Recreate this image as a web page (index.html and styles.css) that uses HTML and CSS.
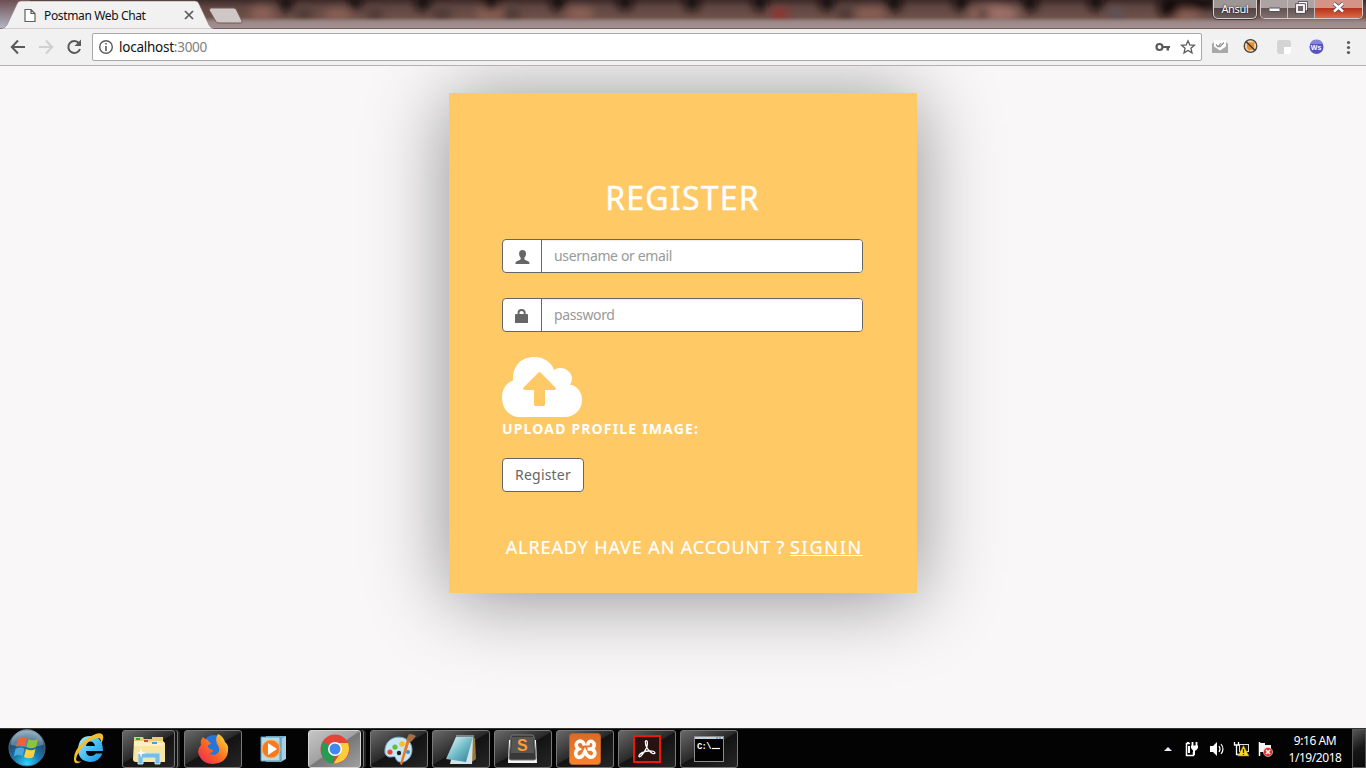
FILE: index.html
```html
<!DOCTYPE html>
<html lang="en">
<head>
<meta charset="utf-8">
<title>Postman Web Chat</title>
<link rel="stylesheet" href="styles.css">
</head>
<body>
<div class="desktop">
  <header class="titlebar">
    <svg class="glass" width="1366" height="29" viewBox="0 0 1366 29" aria-hidden="true">
      <defs>
        <linearGradient id="base" x1="0" y1="0" x2="0" y2="1"><stop offset="0" stop-color="#3e2b2a"/><stop offset=".25" stop-color="#604641"/><stop offset=".65" stop-color="#70524b"/><stop offset=".78" stop-color="#8b7773"/><stop offset="1" stop-color="#a49091"/></linearGradient>
        <filter id="soft" x="-50%" y="-50%" width="200%" height="200%"><feGaussianBlur stdDeviation="4"/></filter>
        <linearGradient id="leftglass" x1="0" y1="0" x2="0" y2="1"><stop offset="0" stop-color="#6c4f50"/><stop offset="1" stop-color="#b4b5c6"/></linearGradient>
        <linearGradient id="edge" x1="0" y1="0" x2="0" y2="1"><stop offset="0" stop-color="#9c8888" stop-opacity="0"/><stop offset=".5" stop-color="#9c8888"/><stop offset="1" stop-color="#a49293"/></linearGradient>
      </defs>
      <rect width="1366" height="29" fill="url(#base)"/>
      <g filter="url(#soft)">
        <g fill="#8c6155"><ellipse cx="262" cy="14" rx="12" ry="8"/><ellipse cx="338" cy="15" rx="14" ry="6"/><ellipse cx="490" cy="14" rx="14" ry="7"/><ellipse cx="580" cy="14" rx="14" ry="7"/><ellipse cx="870" cy="14" rx="16" ry="6"/><ellipse cx="994" cy="14" rx="25" ry="9" fill="#9c6f66"/><ellipse cx="1184" cy="16" rx="16" ry="7"/></g>
        <g fill="#4c3936"><ellipse cx="304" cy="14" rx="9" ry="6"/><ellipse cx="375" cy="14" rx="9" ry="6"/><ellipse cx="442" cy="14" rx="10" ry="6"/><ellipse cx="512" cy="14" rx="9" ry="6"/><ellipse cx="846" cy="14" rx="9" ry="6"/><ellipse cx="983" cy="14" rx="7" ry="5"/></g>
        <g fill="#160d0f"><ellipse cx="286" cy="3" rx="7" ry="9"/><ellipse cx="355" cy="2" rx="7" ry="8"/><ellipse cx="423" cy="2" rx="8" ry="9"/><ellipse cx="491" cy="2" rx="8" ry="9"/><ellipse cx="558" cy="2" rx="8" ry="9"/><ellipse cx="625" cy="2" rx="8" ry="8"/><ellipse cx="692" cy="2" rx="8" ry="9"/><ellipse cx="760" cy="2" rx="8" ry="9"/><ellipse cx="827" cy="2" rx="8" ry="9"/><ellipse cx="894" cy="2" rx="8" ry="10"/><ellipse cx="961" cy="2" rx="8" ry="9"/><ellipse cx="1030" cy="2" rx="8" ry="10"/><ellipse cx="1096" cy="2" rx="8" ry="9"/><ellipse cx="1169" cy="6" rx="11" ry="12"/><ellipse cx="1196" cy="3" rx="28" ry="7"/></g>
        <ellipse cx="780" cy="14" rx="9" ry="5" fill="#9a2e2b"/><ellipse cx="1116" cy="14" rx="9" ry="6" fill="#5c5259"/>
        <ellipse cx="1245" cy="22" rx="55" ry="4" fill="#695858"/>
      </g>
      <rect x="0" width="30" height="28" fill="url(#leftglass)"/>
      <rect y="17" x="200" width="1166" height="11" fill="url(#edge)"/>
      <rect y="28" width="1366" height="1" fill="#76605f"/>
      <path d="M209.500 10.500Q209 8 211.500 8H233.500Q235.500 8 236.500 10L242 21Q242.700 23 240.500 23H219Q216.500 23 215.500 21Z" fill="#cec7c5" stroke="#715b58"/>
      <path d="M0 29Q5 28.500 7 25L17 4Q18 1 21 1H195Q198 1 199 4L209 25Q210.500 28 214 29Z" fill="#f2f1f2" stroke="#8d7b7b" stroke-width=".6"/>
    </svg>
    <div class="tab">
      <svg width="12" height="15" viewBox="0 0 12 15"><path d="M1 1.500H7L11 5.500V13.500H1ZM7 1.500V5.500H11" fill="#fff" stroke="#5f5f5f" stroke-width="1.200"/></svg>
      <span class="tab-title">Postman Web Chat</span>
      <svg class="tab-close" width="10" height="10" viewBox="0 0 10 10"><path d="M1 1L9 9M9 1L1 9" stroke="#5a5a5a" stroke-width="1.700"/></svg>
    </div>
    <div class="window-controls">
      <div class="user">Ansul</div>
      <div class="controls">
        <span class="ctl"><svg width="13" height="6" viewBox="0 0 13 6"><rect x="1" y="1" width="11" height="3.500" rx=".5" fill="#fff" stroke="#55505c"/></svg></span>
        <span class="ctl"><svg width="13" height="13" viewBox="0 0 13 13"><path d="M4.500 3V1.800H11.200V8.500H9.500" fill="none" stroke="#454354" stroke-width="3"/><path d="M4.500 3V1.800H11.200V8.500H9.500" fill="none" stroke="#fff" stroke-width="1.500"/><rect x="2" y="4" width="7" height="7" fill="none" stroke="#454354" stroke-width="3.400"/><rect x="2" y="4" width="7" height="7" fill="#70606a" stroke="#fff" stroke-width="1.800"/></svg></span>
        <span class="ctl close"><svg width="13" height="11" viewBox="0 0 13 11"><path d="M2 1.500L11 9.500M11 1.500L2 9.500" stroke="#514354" stroke-width="4"/><path d="M2 1.500L11 9.500M11 1.500L2 9.500" stroke="#fff" stroke-width="2.500"/></svg></span>
      </div>
    </div>
  </header>

  <nav class="toolbar">
    <svg class="nav-icons" width="92" height="36" viewBox="0 0 92 36" fill="none" stroke-width="2"><path d="M25 18H12M18 11.500L11.800 18L18 24.500" stroke="#5a5a5a"/><path d="M39 18H52M46 11.500L52.200 18L46 24.500" stroke="#d0d0d0"/><path d="M79 14.200A6 6 0 1 0 80 20" stroke="#5a5a5a"/><path d="M81 10.500V17H74.500Z" fill="#5a5a5a"/></svg>
    <div class="address">
      <svg width="16" height="16" viewBox="0 0 16 16"><circle cx="8" cy="8" r="6.300" fill="none" stroke="#5a5a5a" stroke-width="1.400"/><path d="M7.200 7H8.800V12H7.200ZM7.200 4H8.800V5.600H7.200Z" fill="#5a5a5a"/></svg>
      <span class="url">localhost<em>:3000</em></span>
      <svg width="16" height="10" viewBox="0 0 16 10"><circle cx="4.500" cy="5" r="3" fill="none" stroke="#5a5a5a" stroke-width="2.200"/><path d="M8 4H15V6H14V8.500H11.500V6H8Z" fill="#5a5a5a"/></svg>
      <svg class="star" width="16" height="16" viewBox="0 0 16 16"><path d="M8 1.800L9.800 6L14.400 6.300L10.900 9.300L12 13.900L8 11.400L4 13.900L5.100 9.300L1.600 6.300L6.200 6Z" fill="none" stroke="#5a5a5a" stroke-width="1.300"/></svg>
    </div>
    <svg class="extensions" width="164" height="36" viewBox="1202 29 164 36">
      <path d="M1212 44L1215 41H1225L1228 44V53H1212Z" fill="#a9a9a9"/><path d="M1214 40.500H1226V46.500L1220 50.500L1214 46.500Z" fill="#fff"/><path d="M1216 44.500L1218 46.800L1221 43M1219 46L1220 46.800L1224 42.500" fill="none" stroke="#8b8b8b" stroke-width="1.200"/>
      <circle cx="1250.500" cy="46" r="6.300" fill="#f6d6a8" stroke="#454545" stroke-width="1.300"/><circle cx="1250.500" cy="46" r="3.800" fill="#ed8d2b"/><path d="M1247 42L1248 44M1254 42L1253 44M1248 48L1250 50" stroke="#ed8d2b" stroke-width="2"/><path d="M1246 41.500L1255 50.500" stroke="#393939" stroke-width="1.400"/>
      <rect x="1277" y="40" width="14" height="14" rx="3" fill="#d4d4d4"/><path d="M1284 47H1291V52Q1291 54 1289 54H1284Z" fill="#fff"/>
      <circle cx="1316.500" cy="47" r="7" fill="#5554c2"/><path d="M1310 44A7 7 0 0 1 1323 44Z" fill="#8583dd"/><text x="1310.800" y="50" class="ws-label">Ws</text>
      <g fill="#5a5a5a"><circle cx="1348.500" cy="42.500" r="1.600"/><circle cx="1348.500" cy="47.500" r="1.600"/><circle cx="1348.500" cy="52.500" r="1.600"/></g>
    </svg>
  </nav>

  <main class="page">
    <form class="card">
      <h1 class="heading">REGISTER</h1>
      <div class="field">
        <span class="addon"><svg width="15" height="14" viewBox="0 0 15 14"><path d="M7.500 0C9.900 0 11.200 1.700 11 3.900C10.900 5.700 10.200 6.900 9.400 7.800V9.200C9.700 10.100 14 10.900 14.400 12.500V14H.5V12.500C1 10.900 5.300 10.100 5.700 9.200V7.800C4.900 6.900 4.200 5.700 4.100 3.900C3.900 1.700 5.200 0 7.500 0Z" fill="#666"/></svg></span>
        <input class="input user-input" type="text" placeholder="username or email">
      </div>
      <div class="field">
        <span class="addon"><svg width="14" height="14" viewBox="0 0 14 14"><path d="M2.600 5V3.500Q2.600 0 6.500 0Q10.600 0 10.600 3.500V5H12Q13 5 13 6V14H0V6Q0 5 1 5ZM4.500 5H8.700V3.500Q8.700 2 6.600 2Q4.500 2 4.500 3.500Z" fill="#666"/></svg></span>
        <input class="input pass-input" type="password" placeholder="password">
      </div>
      <label class="upload">
        <svg width="80" height="60" viewBox="0 0 80 60"><path d="M11 23.500C10.500 9 19 0 32 0C41 0 48.500 4 52.200 13C60 7.800 70 14 70 22Q70 25 68 27.500C76 29 80 36 80 43C80 53 72 60 63 60H17C7 60 0 51 0 40.500C0 32 4 26.500 11 23.500Z" fill="#fff"/><path d="M36.500 15.500Q37.500 14.500 38.500 15.500L53.500 30.500Q54.500 33 52 33H43V47.500Q43 49 41.500 49H33.500Q32 49 32 47.500V33H23Q20.500 33 21.500 30.500Z" fill="#ffc966"/></svg>
        <span class="upload-label">UPLOAD PROFILE IMAGE:</span>
      </label>
      <button class="submit" type="button"><span>Register</span></button>
      <p class="signin"><span class="already">ALREADY HAVE AN ACCOUNT ?</span> <a class="link" href="#">SIGNIN</a></p>
    </form>
  </main>

  <footer class="taskbar">
    <svg width="0" height="0" class="defs" aria-hidden="true"><defs>
      <radialGradient id="orb" cx=".5" cy=".95" r=".9"><stop offset="0" stop-color="#32d5ff"/><stop offset=".4" stop-color="#157db8"/><stop offset=".75" stop-color="#234d70"/><stop offset="1" stop-color="#7798aa"/></radialGradient>
      <linearGradient id="blue" x1="0" y1="0" x2="1" y2="1"><stop offset="0" stop-color="#b5ecff"/><stop offset=".5" stop-color="#4ac0f3"/><stop offset="1" stop-color="#168ee0"/></linearGradient>
      <linearGradient id="fox" x1="0" y1="1" x2="1" y2="0"><stop offset="0" stop-color="#e8205b"/><stop offset=".5" stop-color="#ff6c20"/><stop offset="1" stop-color="#ffe83b"/></linearGradient>
      <linearGradient id="paper" x1="0" y1="0" x2="1" y2="1"><stop offset="0" stop-color="#f3feff"/><stop offset=".5" stop-color="#75bdca"/><stop offset="1" stop-color="#287c93"/></linearGradient>
      <linearGradient id="orange" x1="0" y1="0" x2="0" y2="1"><stop offset="0" stop-color="#d96b27"/><stop offset="1" stop-color="#fb8328"/></linearGradient>
    </defs></svg>
    <div class="start"><svg width="38" height="38" viewBox="0 0 38 38"><circle cx="19" cy="19" r="18" fill="url(#orb)" stroke="#496d86"/><path d="M3 16A16 16 0 0 1 35 16Q20 20 3 16Z" fill="#c5d9e4" opacity=".35"/><path d="M10 10Q14 7 19 9.500L17 17.500Q12 15.500 8 18Z" fill="#ef6239"/><path d="M20.500 10Q25 12.500 30 10L28 18Q23 20.500 18.500 18Z" fill="#8bc53f"/><path d="M7.500 20Q12 17.500 16.500 19.500L14.500 27Q10 25 5.800 27.500Z" fill="#4ca6e0"/><path d="M18 20Q23 22.500 27.500 20L25.500 28Q21 30.500 16 28Z" fill="#ffd13d"/></svg></div>
    <div class="slot"><svg width="32" height="32" viewBox="0 0 32 32"><path fill-rule="evenodd" d="M30 18H13Q13 23 18 23Q21 23 23 20.500H29.500Q26 29 17 29Q5 28 5 16Q6 3 17 3Q30 3 30 18ZM13 13H22Q21 8.500 17.500 8.500Q14 8.500 13 13Z" fill="url(#blue)"/><path d="M9 28Q2 33 1 27Q0 18 11 8Q24-2 29 1Q32 4 28 11Q29 4 23 5Q15 7 8 16Q1 26 4 28Q6 29 9 28Z" fill="#f6bd27"/></svg></div>
    <div class="slot"><div class="task stacked"><svg width="34" height="32" viewBox="0 0 34 32"><path d="M2 8V4H11L12 6H20V4H31V26H2Z" fill="#e6cc73"/><path d="M2 8H31L33 10V29H4Q1 29 1 26Z" fill="#f7e5a0"/><path d="M2 8H12V10H31V13H2Z" fill="#fff1bd"/><rect x="4" y="5" width="4" height="2" fill="#24a842"/><rect x="12" y="7" width="4" height="2" fill="#d04e37"/><rect x="20" y="9" width="5" height="2" fill="#3ca7df"/><path d="M6 20H28V31H23V25H11V31H6Z" fill="#79bde0" stroke="#c7ebfa"/><path d="M9 14L10 19L14 20L10 21L9 25L8 21L4 20L8 19Z" fill="#fff"/></svg></div></div>
    <div class="slot"><div class="task"><svg width="32" height="32" viewBox="0 0 32 32"><circle cx="17" cy="14" r="12" fill="#2675dd"/><path d="M6 4Q3 7 4 12Q1 15 1 19Q4 31 16 31Q30 30 31 18Q32 12 28 9Q26 3 21 1Q18 5 20 11Q24 16 21 20Q17 24 12 20Q16 20 16 17Q10 16 11 12Q13 12 14 10Q11 9 11 7Q8 7 6 4Z" fill="url(#fox)"/></svg></div></div>
    <div class="slot"><svg width="28" height="28" viewBox="0 0 28 28"><path d="M7 1H27V24L22 27H7Z" fill="#76aecb"/><path d="M2 2H21V26H2Z" fill="#b7dce9" stroke="#5a9bbc"/><path d="M24 3V25M26 2V24" stroke="#d9f1fb"/><circle cx="12" cy="14" r="9" fill="#f47b20" stroke="#ffae5b"/><path d="M9 8L18 14L9 20Z" fill="#fff"/></svg></div>
    <div class="slot"><div class="task stacked active"><svg width="30" height="30" viewBox="0 0 30 30"><circle cx="15" cy="15" r="14.500" fill="#e54538"/><path d="M15 15L2.500 8Q-2 20 6 27Q10 30 14 29.400Z" fill="#279b54"/><path d="M15 9H28Q31 18 25 25Q21 29 13.500 29.400L21 18Z" fill="#fbcd3b"/><path d="M2.500 7.500L9 18L15 15Z" fill="#279b54"/><circle cx="15" cy="15" r="7" fill="#fff"/><circle cx="15" cy="15" r="5.500" fill="#4387ef"/></svg></div></div>
    <div class="slot"><div class="task"><svg width="34" height="34" viewBox="0 0 34 34"><path d="M3 17C4 8 13 3 22 6C30 9 32 18 28 25C24 31 16 32 14 27C13 22 9 27 5 24Q2 22 3 17Z" fill="#c8e7f6" stroke="#78abc7"/><circle cx="8" cy="20" r="2.600" fill="#e04a36"/><circle cx="13" cy="15" r="2.600" fill="#6ab83d"/><circle cx="20" cy="12" r="2.800" fill="#f7bd2f"/><circle cx="17" cy="21" r="2.200" fill="#222"/><circle cx="26" cy="20" r="2" fill="#3e91ce"/><path d="M28 8L20 33L18 32L25 7Z" fill="#e87923"/><path d="M24 8L27 2Q31 2 34 4L29 10Z" fill="#a77042"/></svg></div></div>
    <div class="slot"><div class="task"><svg width="32" height="32" viewBox="0 0 32 32"><path d="M26 5H30L31 26L25 30Z" fill="#9b793b"/><path d="M11 4H28L27 31H5Z" fill="#d2e4e8"/><path d="M11 4H28L21 29L1 26Z" fill="url(#paper)"/><path d="M12 2V5M14 2V5M16 2V5M18 2V5M20 2V5M22 2V5M24 2V5M26 2V5M28 2V5" stroke="#bcd2da"/></svg></div></div>
    <div class="slot"><div class="task"><svg width="32" height="32" viewBox="0 0 32 32"><path d="M2 7L1 30H30L29 7Z" fill="#f5f5f5"/><path d="M4 4Q4 2 6 2H25Q27 2 27 4L29 25Q29 27 27 27H4Q2 27 2 25Z" fill="#383838" stroke="#787878"/><path d="M5 4H26L27 20H4Z" fill="#565656"/><text x="10" y="18" class="sublime-label">S</text></svg></div></div>
    <div class="slot"><div class="task"><svg width="32" height="32" viewBox="0 0 32 32"><rect x=".5" y=".5" width="31" height="31" rx="3" fill="url(#orange)" stroke="#ba5e29"/><path d="M15.500 12.500C14.500 8.500 12 7.500 9.500 8.500C6.500 10 6.500 14 9.500 16C6 17.500 6 22.500 8.500 24C12 25.500 14.500 22 16 18.500C17.500 22 20 25 23.500 24C27 22 26.500 17.500 22.500 16H18.500M22.500 16C26 14 26 10 23 8.500C20 7.500 18.500 10 19 12.500" fill="none" stroke="#fff" stroke-width="3.600"/></svg></div></div>
    <div class="slot"><div class="task"><svg width="28" height="28" viewBox="0 0 28 28"><rect x="1" y="1" width="26" height="26" fill="#26120f" stroke="#ed1809" stroke-width="2"/><path d="M12.500 8Q12 5 14 6Q15 8 13.500 13Q11 18 8 21Q5.500 23 6 20.500Q8 17 15 16Q22 15.500 22 18Q20 20 16.500 16Q12.500 12 12.500 8Z" fill="none" stroke="#fff" stroke-width="1.300"/></svg></div></div>
    <div class="slot"><div class="task"><svg width="30" height="26" viewBox="0 0 30 26"><rect x=".5" y=".5" width="29" height="25" fill="#020202" stroke="#8d8d8d"/><path d="M1 1H29V3H1Z" fill="#c1d4dd"/><path d="M22 2H24M25 2H27" stroke="#4774a6"/><text x="3" y="13" class="cmd-label">C:\</text><path d="M18 12.500H26" stroke="#fff" stroke-width="1.200"/></svg></div></div>
    <div class="tray">
      <svg width="118" height="28" viewBox="1160 735 118 28">
        <path d="M1164 751L1168 747L1172 751Z" fill="#e8eef5"/>
        <g stroke="#fff" fill="none" stroke-width="1.500"><path d="M1190 743.500H1186.500V755.500H1193.500V752"/><path d="M1188 742V744M1189 746V753" stroke-width="2"/><path d="M1192.500 742V746M1196.500 742V746" stroke-width="1.800"/></g><path d="M1191 745.500H1198V748L1196 750.500H1195V755H1193V750.500L1191 748Z" fill="#fff"/>
        <path d="M1210 746H1213L1217 742V756L1213 752H1210Z" fill="#fff"/><path d="M1219 746Q1221 749 1219 752M1221 744Q1225 749 1221 754" fill="none" stroke="#fff" stroke-width="1.200"/>
        <path d="M1234.500 742V745H1238.500V742M1236.500 745V754.500H1241" stroke="#fff" stroke-width="1.300" fill="none"/><rect x="1239.500" y="744.500" width="9" height="7" fill="#151515" stroke="#ddd"/><path d="M1243.500 745.500L1249 756H1238Z" fill="#ffda25" stroke="#9e8500" stroke-width=".6"/><path d="M1243.500 749V753M1243.500 754V755" stroke="#302600" stroke-width="1.300"/>
        <path d="M1259.500 742V756" stroke="#fff" stroke-width="1.500"/><path d="M1260 743H1265V745H1271V752H1260Z" fill="#f5f5f5"/><circle cx="1268" cy="752" r="4.600" fill="#df322b" stroke="#fff" stroke-width=".5"/><path d="M1266 750L1270 754M1270 750L1266 754" stroke="#fff" stroke-width="1.500"/>
      </svg>
      <div class="clock"><span>9:16 AM</span><span>1/19/2018</span></div>
      <div class="show-desktop"></div>
    </div>
  </footer>
</div>
</body>
</html>
```
FILE: styles.css
```css
* { box-sizing: border-box; }
body { margin: 0; font-family: "Noto Sans", "Open Sans", sans-serif; }
svg { display: block; flex: none; }
.desktop { width: 1366px; height: 768px; display: flex; flex-direction: column; overflow: hidden; }

/* Window title bar */
.titlebar { position: relative; height: 29px; display: flex; justify-content: space-between; flex: none; }
.glass { position: absolute; left: 0; top: 0; }
.tab { position: relative; width: 200px; height: 29px; padding: 1px 6px 0 24px; display: flex; align-items: center; }
.tab-title { margin-left: 8px; font-size: 12px; letter-spacing: -.36px; color: #111; white-space: nowrap; }
.tab-close { margin-left: auto; }
.window-controls { position: relative; display: flex; gap: 3px; height: 19px; margin-right: 3px; }
.user { width: 44px; height: 19px; border: 1px solid #d6cdcd; border-top: 0; border-radius: 0 0 5px 5px; background: linear-gradient(#9e9595 0 45%, #524444 46%, #6c5c5b); color: #fff; font-size: 11px; letter-spacing: -.3px; line-height: 17px; text-align: center; text-shadow: 0 0 2px #000; box-shadow: 0 0 0 1px #473a3b; }
.controls { display: flex; width: 103px; height: 19px; border: 1px solid #d9caca; border-top: 0; border-radius: 0 0 5px 5px; overflow: hidden; }
.ctl { width: 27px; display: flex; align-items: center; justify-content: center; padding-bottom: 3px; border-right: 1px solid #c7b9b9; background: linear-gradient(#ada3a3 0 45%, #625252 46%, #807170); }
.ctl:first-child { padding: 2px 0 0; }
.ctl.close { flex: 1; border-right: 0; background: linear-gradient(#d39487 0 45%, #b6321b 46%, #dc6a47); }

/* Browser toolbar */
.toolbar { height: 37px; flex: none; display: flex; align-items: flex-start; background: #f2f1f2; border-bottom: 1px solid #b4b2b4; }
.address { width: 1110px; height: 28px; margin-top: 4px; padding: 0 5px; display: flex; align-items: center; background: #fff; border: 1px solid #a9a8a9; border-radius: 2px; }
.url { margin: 0 auto 0 5px; font-size: 13.500px; letter-spacing: -.25px; color: #111; }
.url em { font-style: normal; color: #808080; }
.star { margin-left: 9px; }
.ws-label { font: bold 7px "Liberation Sans", sans-serif; fill: #fff; }

/* Registration page */
.page { height: 662px; flex: none; padding-top: 27px; background: #f9f7f8; overflow: hidden; }
.card { width: 468px; height: 500px; margin: 0 auto; padding: 82px 54px 0 53px; background: #ffc966; box-shadow: 0 5px 75px rgba(0, 0, 0, .43); font-family: "Comic Sans MS", "Noto Sans", sans-serif; }
.heading { margin: 0 0 20px; padding-top: 1px; height: 44px; font-size: 32px; line-height: 44px; font-weight: 400; letter-spacing: 1.2px; color: #fff; text-align: center; -webkit-text-stroke: .4px #fff; }
.field { display: flex; height: 34px; margin-bottom: 25px; border: 1px solid #666; border-radius: 4px; background: #fff; overflow: hidden; }
.addon { width: 39px; padding-top: 1px; display: flex; align-items: center; justify-content: center; border-right: 1px solid #666; }
.input { flex: 1; min-width: 0; border: 0; outline: 0; padding: 0 12px 2px; font: 14px "Comic Sans MS", "Noto Sans", sans-serif; letter-spacing: -.36px; box-shadow: inset 0 1px 1px rgba(0, 0, 0, .075); }
.input::placeholder { color: #999; }
.upload { display: block; height: 101px; color: #fff; }
.upload-label { display: block; font-size: 14px; line-height: 20px; height: 20px; padding-top: 2px; font-weight: 700; letter-spacing: 1.17px; white-space: nowrap; }
.submit { display: block; width: 82px; height: 34px; padding: 0 0 2px; border: 1px solid #666; border-radius: 4px; background: #fff; color: #666; font: 14px "Comic Sans MS", "Noto Sans", sans-serif; letter-spacing: .2px; }
.signin { margin: 43px 0 0; font-size: 18px; line-height: 25px; color: #fff; white-space: nowrap; text-align: right; -webkit-text-stroke: .2px #fff; }
.already { letter-spacing: .88px; }
.link { color: #fff; letter-spacing: 1.75px; }

/* Taskbar */
.taskbar { height: 40px; flex: none; display: flex; background: #030303; border-top: 1px solid #34332f; }
.defs { position: absolute; }
.start { width: 60px; padding-left: 8px; }
.slot { width: 62px; height: 39px; display: flex; align-items: center; }
.slot > svg { margin: 0 auto 0 13px; }
.task { width: 58px; height: 38px; display: flex; align-items: center; justify-content: center; border: 1px solid #797979; border-radius: 3px; background: linear-gradient(150deg, #696969, #292929 48%, #131313 50%, #252525); }
.stacked { width: 53px; box-shadow: 2px 0 #111, 3px 0 #777, 5px 0 #222; }
.active { border-color: #d4d4d4; background: linear-gradient(145deg, #c6c6c6, #a2a2a2 48%, #777 51%, #a0a0a0); }
.sublime-label { font: bold 16px "Liberation Sans", sans-serif; fill: #ff9c35; }
.cmd-label { font: bold 9px "Liberation Mono", monospace; fill: #fff; letter-spacing: -.8px; }
.tray { display: flex; margin-left: auto; align-items: center; }
.clock { width: 74px; display: flex; flex-direction: column; align-items: center; font-size: 12px; line-height: 17px; letter-spacing: -.45px; color: #fff; white-space: nowrap; }
.show-desktop { width: 14px; height: 39px; border: 1px solid #565656; background: linear-gradient(145deg, #575757, #171717 50%, #090909); }
```
